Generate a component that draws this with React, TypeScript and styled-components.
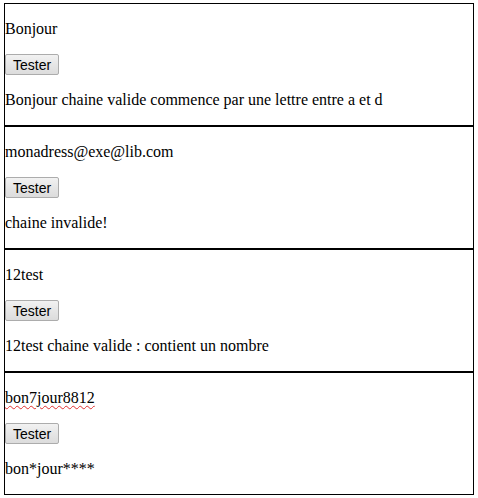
import React from "react";
import styled, { createGlobalStyle } from "styled-components";

const Global = createGlobalStyle`
  html, body { background: #fff; }
  body {
    margin: 3px 0 0 4px;
    font-family: "Liberation Serif", "Times New Roman", serif;
    font-size: 16px;
    color: #000;
  }
`;

const Page = styled.div`
  width: 470px;
  display: flex;
  flex-direction: column;
`;

const Box = styled.div`
  border: 1px solid #000;
`;

const Line = styled.p`
  margin: 16px 0;
  line-height: 18px;
`;

const Spell = styled.span`
  text-decoration: underline wavy #e03030;
  text-decoration-thickness: 1px;
  text-underline-offset: 2px;
`;

const Button = styled.button`
  display: block;
  margin: 0;
  height: 21px;
  padding: 0 7px;
  font-family: "Liberation Sans", Arial, sans-serif;
  font-size: 14px;
  color: #000;
  background: linear-gradient(#f2f2f2, #e6e6e6 50%, #dcdcdc);
  border: 1px solid #acacac;
  border-radius: 2px;
`;

const items = [
  { input: "Bonjour", result: "Bonjour chaine valide commence par une lettre entre a et d" },
  { input: "monadress@exe@lib.com", result: "chaine invalide!" },
  { input: "12test", result: "12test chaine valide : contient un nombre" },
  { input: "bon7jour8812", result: "bon*jour****", spell: true },
];

export default function App() {
  return (
    <>
      <Global />
      <Page>
        {items.map((it) => (
          <Box key={it.input}>
            <Line>{it.spell ? <Spell>{it.input}</Spell> : it.input}</Line>
            <Button>Tester</Button>
            <Line>{it.result}</Line>
          </Box>
        ))}
      </Page>
    </>
  );
}
